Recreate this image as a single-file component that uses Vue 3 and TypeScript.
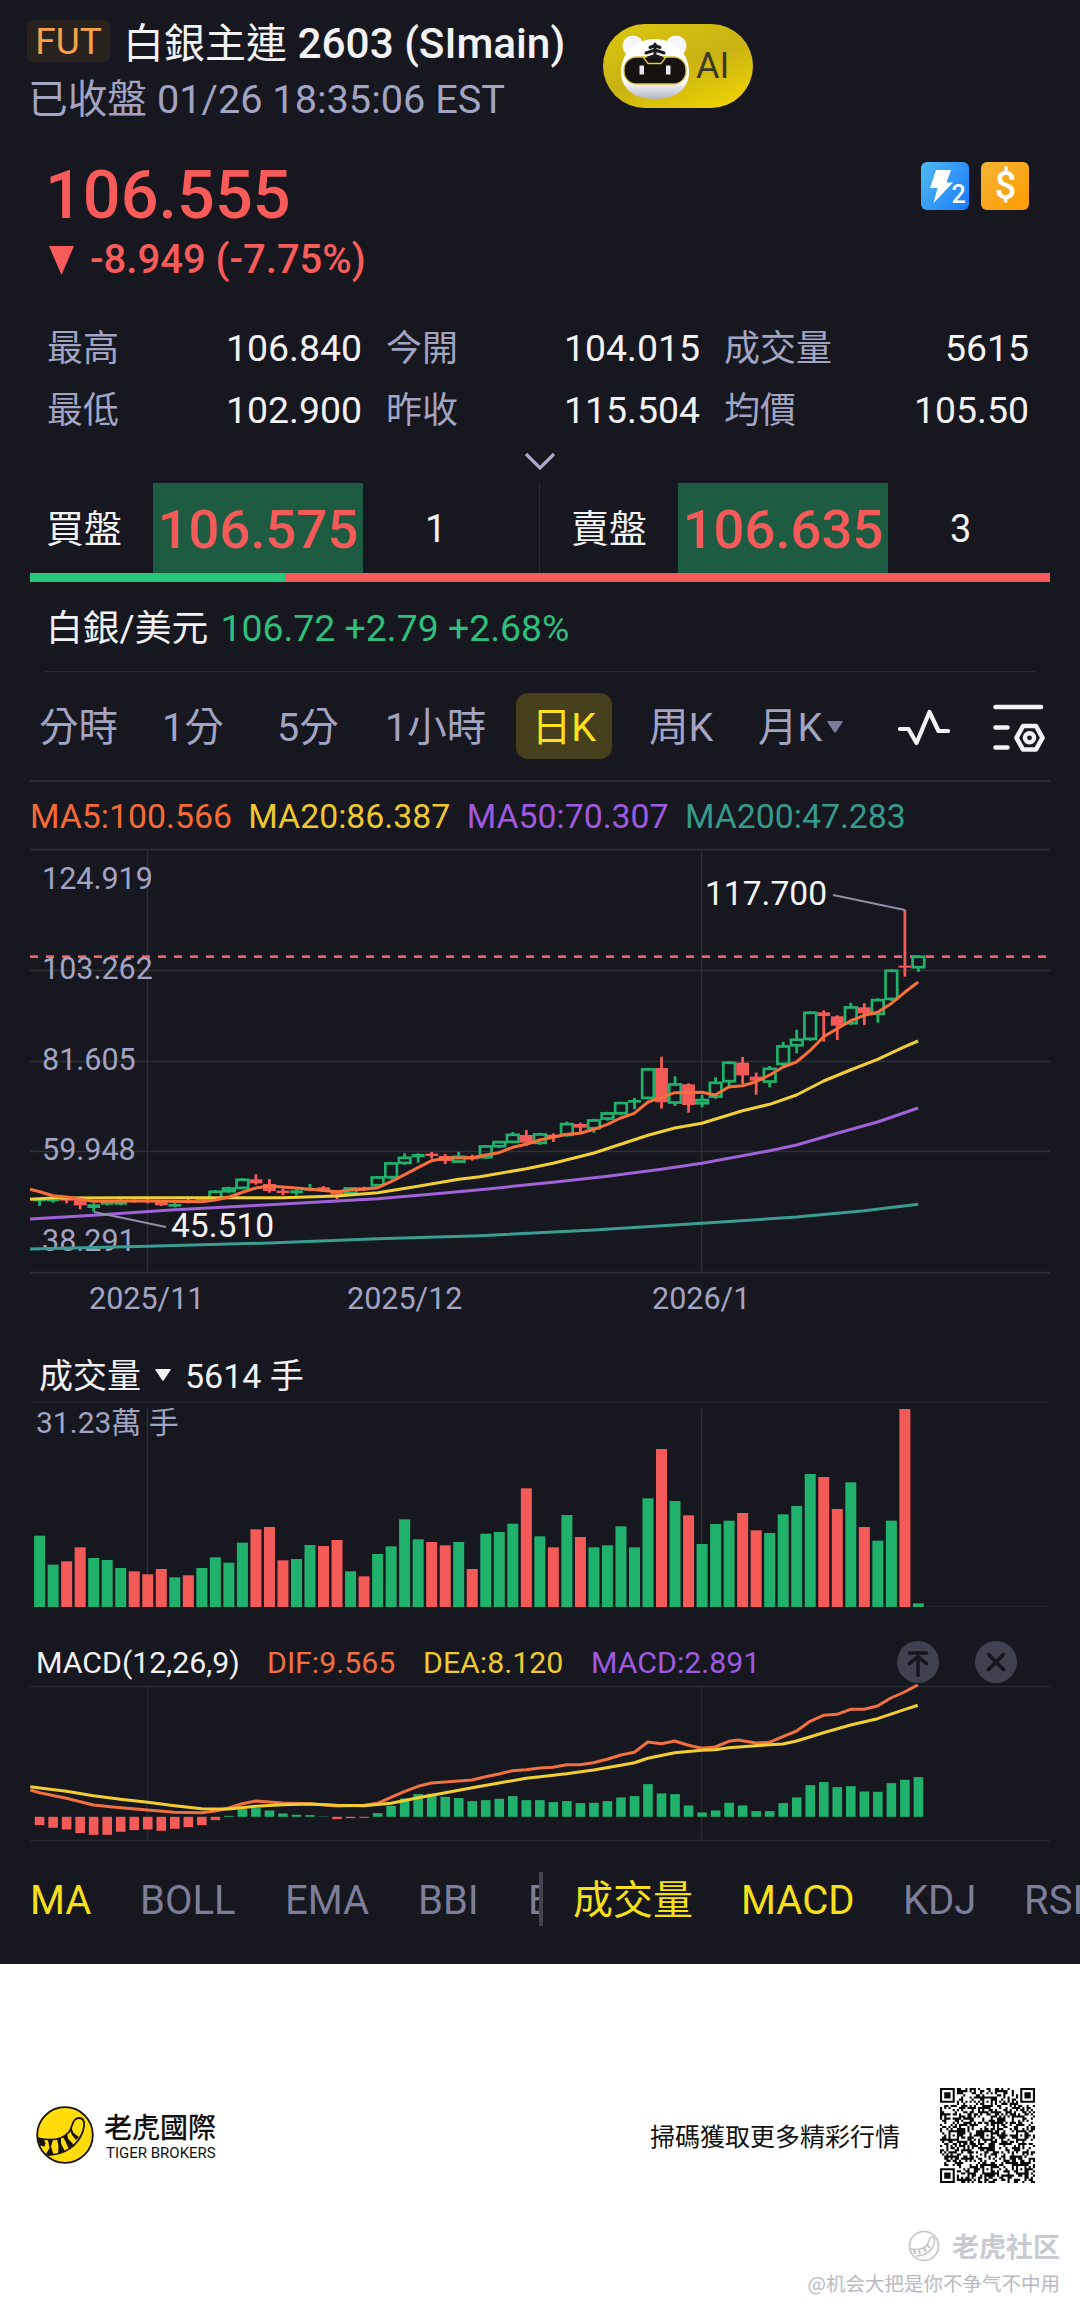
<script setup lang="ts">
import { ref } from 'vue';

type Point = [number, number];
// body top, body bottom, high, low (svg y), rising
type Candle = [number, number, number, number, boolean];

const stats = [
  { label: '最高', value: '106.840' },
  { label: '今開', value: '104.015' },
  { label: '成交量', value: '5615' },
  { label: '最低', value: '102.900' },
  { label: '昨收', value: '115.504' },
  { label: '均價', value: '105.50' },
];

const periods = ['分時', '1分', '5分', '1小時', '日K', '周K', '月K'];
const activePeriod = ref('日K');

const averages = [
  { name: 'MA5', value: '100.566', cls: 'c-orange' },
  { name: 'MA20', value: '86.387', cls: 'c-gold' },
  { name: 'MA50', value: '70.307', cls: 'c-purple' },
  { name: 'MA200', value: '47.283', cls: 'c-teal' },
];

const mainIndicators = ['MA', 'BOLL', 'EMA', 'BBI', 'E'];
const subIndicators = ['成交量', 'MACD', 'KDJ', 'RSI'];
const activeMain = ref('MA');
const activeSub = ref(['成交量', 'MACD']);

const STEP = 13.52;
const FIRST = 39.6;
const cx = (i: number) => FIRST + STEP * i;

const UP = '#20b26c';
const DOWN = '#f45b58';

// ---- price chart ----
const priceLabels = [
  { y: 889, text: '124.919' },
  { y: 979, text: '103.262' },
  { y: 1070, text: '81.605' },
  { y: 1160, text: '59.948' },
  { y: 1251, text: '38.291' },
];

// offsets from y=840, three units per pixel
const rawCandles: [number, number, number, number, string][] = [
  [1078, 1084, 1076, 1098, 'g'], [1078, 1084, 1078, 1088, 'g'], [1074, 1082, 1072, 1090, 'r'],
  [1078, 1096, 1078, 1108, 'r'], [1093, 1104, 1090, 1115, 'g'], [1086, 1094, 1080, 1096, 'g'],
  [1086, 1094, 1076, 1096, 'g'], [1082, 1086, 1078, 1088, 'r'], [1080, 1086, 1076, 1090, 'r'],
  [1086, 1096, 1084, 1098, 'r'], [1092, 1100, 1088, 1102, 'g'], [1081, 1087, 1076, 1090, 'r'],
  [1074, 1082, 1072, 1084, 'g'], [1053, 1078, 1050, 1080, 'g'], [1043, 1056, 1040, 1058, 'g'],
  [1017, 1046, 1014, 1048, 'g'], [1018, 1030, 1003, 1034, 'r'], [1032, 1053, 1017, 1058, 'r'],
  [1052, 1059, 1045, 1066, 'r'], [1051, 1060, 1048, 1066, 'g'], [1044, 1052, 1032, 1054, 'g'],
  [1042, 1050, 1038, 1056, 'r'], [1052, 1064, 1050, 1078, 'r'], [1043, 1062, 1042, 1064, 'g'],
  [1042, 1050, 1040, 1052, 'r'], [1010, 1038, 1008, 1040, 'g'], [968, 1014, 966, 1018, 'g'],
  [951, 971, 940, 974, 'g'], [942, 952, 940, 968, 'g'], [941, 948, 936, 956, 'r'],
  [948, 963, 942, 972, 'r'], [948, 967, 935, 968, 'g'], [948, 958, 944, 962, 'r'],
  [917, 954, 915, 956, 'g'], [904, 921, 902, 924, 'g'], [882, 908, 876, 910, 'g'],
  [885, 908, 870, 918, 'r'], [881, 911, 878, 914, 'g'], [884, 892, 880, 906, 'r'],
  [850, 887, 845, 890, 'g'], [852, 863, 848, 880, 'r'], [839, 867, 836, 878, 'g'],
  [818, 838, 815, 842, 'g'], [787, 822, 785, 826, 'g'], [780, 788, 774, 808, 'g'],
  [686, 776, 684, 778, 'g'], [684, 787, 650, 806, 'r'], [731, 790, 709, 798, 'g'],
  [733, 795, 730, 818, 'r'], [778, 792, 764, 802, 'g'], [726, 772, 712, 776, 'g'],
  [666, 726, 664, 738, 'g'], [668, 706, 651, 732, 'r'], [710, 722, 698, 764, 'r'],
  [684, 727, 678, 742, 'g'], [617, 674, 605, 680, 'g'], [597, 618, 569, 640, 'g'],
  [516, 599, 514, 602, 'g'], [517, 528, 511, 605, 'r'], [529, 557, 526, 600, 'r'],
  [500, 552, 488, 554, 'g'], [502, 520, 490, 555, 'r'], [478, 524, 475, 548, 'g'],
  [390, 479, 388, 482, 'g'], [377, 383, 210, 410, 'r'], [348, 384, 346, 395, 'g'],
];
const py = (v: number) => 840 + v / 3;
const candles: Candle[] = rawCandles.map(([t, b, h, l, c]) => [py(t), py(b), py(h), py(l), c === 'g']);

// hollow bodies only when there is room for the hole
const isHollow = (c: Candle) => c[4] && c[1] - c[0] > 4;

// left and right halves are sampled on different x scales
function toPath(left: Point[], right: Point[], lx: number, rx: number, rOff: number, yOff: number) {
  const pts = [
    ...left.map(([x, y]) => [x / lx, yOff + y / 3]),
    ...right.map(([x, y]) => [rOff + x / rx, yOff + y / 3]),
  ];
  return pts.map(([x, y]) => `${x.toFixed(1)},${y.toFixed(1)}`).join(' ');
}
const pricePath = (l: Point[], r: Point[]) => toPath(l, r, 3, 2.6133, 480, 840);
const macdPath = (l: Point[], r: Point[]) => toPath(l, r, 2.9037, 2.9037, 540, 1630);

const ma5 = pricePath(
  [[90, 1048], [119, 1055], [159, 1067], [200, 1071], [240, 1078], [281, 1084], [443, 1083], [605, 1085],
    [646, 1080], [687, 1071], [727, 1057], [768, 1044], [808, 1038], [889, 1044], [1011, 1055], [1052, 1050],
    [1092, 1048], [1133, 1043], [1173, 1025], [1214, 1004], [1254, 983], [1295, 962], [1335, 954], [1416, 953]],
  [[15, 945], [50, 938], [86, 922], [121, 913], [156, 900], [191, 892], [227, 883], [262, 880], [298, 868],
    [333, 853], [368, 834], [403, 820], [439, 786], [474, 772], [509, 758], [580, 757], [615, 765], [650, 741],
    [686, 737], [721, 725], [757, 705], [792, 681], [827, 666], [862, 632], [898, 590], [933, 566], [968, 543],
    [1004, 526], [1039, 517], [1074, 491], [1110, 457], [1145, 426]],
);
const ma20 = pricePath(
  [[90, 1078], [159, 1074], [400, 1073], [850, 1073], [1011, 1068], [1133, 1058], [1254, 1039], [1376, 1018]],
  [[0, 1010], [121, 986], [191, 970], [298, 939], [439, 886], [509, 864], [580, 850], [686, 812], [757, 793],
    [827, 765], [898, 723], [968, 690], [1039, 658], [1110, 620], [1145, 603]],
);
const ma50 = pricePath(
  [[90, 1137], [281, 1126], [524, 1109], [808, 1094], [1133, 1076], [1300, 1062]],
  [[0, 1049], [191, 1027], [333, 1009], [474, 988], [580, 970], [757, 932], [827, 915], [933, 880],
    [1039, 846], [1145, 804]],
);
const ma200 = pricePath(
  [[90, 1227], [443, 1219], [808, 1209], [1133, 1196]],
  [[0, 1187], [298, 1170], [580, 1150], [827, 1131], [1004, 1112], [1145, 1093]],
);

// ---- volume ----
const volumes =
  ('587g 674g 664r 622r 654g 660g 684g 694r 703r 687r 712g 706r 684g 652g 668g 608g 568r 561r 661r 657g 615g ' +
  '618r 600r 694g 709r 642g 619g 538g 598g 606r 616r 606g 687r 581g 576g 551g 445r 589g 622r 525g 591r 622g ' +
  '616g 559g 622g 475g 327r 483g 526r 612g 552g 542g 519r 571r 579g 523g 498g 402g 411r 507r 427g 561r 602g ' +
  '542g 207r 790g')
    .split(' ')
    .map((s) => ({ h: (801 - parseInt(s)) / 3, up: s.endsWith('g') }));

// ---- macd ----
const ZERO = 1816.8;
const macdBars = [
  585, 593, 598, 609, 614, 614, 605, 600, 598, 602, 596, 591, 585, 570, 557, 537, 534, 541, 550, 554, 555, 559,
  567, 564, 563, 549, 527, 505, 492, 491, 500, 504, 513, 510, 506, 498, 510, 510, 516, 513, 519, 518, 513, 502,
  498, 462, 490, 492, 526, 547, 541, 518, 526, 543, 543, 519, 502, 465, 456, 471, 468, 484, 485, 459, 449, 441,
].map((v) => (560 - v) / 3);

const dif = macdPath(
  [[88, 480], [115, 488], [193, 505], [271, 525], [350, 533], [429, 540], [507, 547], [586, 548], [625, 543],
    [664, 534], [703, 521], [743, 513], [821, 519], [900, 521], [978, 528], [1057, 526], [1096, 520], [1135, 502],
    [1174, 485], [1214, 469], [1253, 459], [1331, 453], [1371, 450], [1410, 440], [1449, 432], [1488, 422],
    [1528, 419]],
  [[0, 414], [38, 412], [77, 404], [116, 404], [155, 398], [195, 388], [235, 375], [274, 367], [313, 336],
    [352, 341], [391, 333], [431, 346], [470, 355], [509, 351], [548, 334], [575, 330], [627, 339], [666, 337],
    [705, 320], [745, 303], [784, 274], [823, 256], [862, 253], [902, 238], [941, 238], [980, 228], [1019, 204],
    [1058, 186], [1097, 165]],
);
const dea = macdPath(
  [[88, 470], [115, 474], [193, 484], [271, 497], [350, 508], [429, 517], [507, 527], [586, 536], [664, 537],
    [743, 529], [821, 524], [900, 522], [978, 526], [1057, 527], [1135, 520], [1214, 503], [1293, 488],
    [1371, 473], [1449, 459], [1528, 445]],
  [[0, 440], [77, 431], [155, 420], [235, 406], [274, 398], [313, 385], [391, 368], [470, 361], [509, 359],
    [548, 353], [627, 347], [705, 342], [745, 333], [823, 308], [902, 285], [980, 266], [1058, 239], [1097, 226]],
);

// ---- qr: 45x45 modules ----
function buildQr(n = 45) {
  let seed = 20260126;
  const rand = () => {
    seed = (seed * 1664525 + 1013904223) >>> 0;
    return seed / 4294967296;
  };
  const grid = Array.from({ length: n }, () => Array.from({ length: n }, () => rand() < 0.5));
  const ring = (r: number, c: number, size: number, core: number) => {
    for (let y = -size; y <= size; y++) {
      for (let x = -size; x <= size; x++) {
        const gy = r + y;
        const gx = c + x;
        if (gy < 0 || gx < 0 || gy >= n || gx >= n) continue;
        const d = Math.max(Math.abs(x), Math.abs(y));
        grid[gy][gx] = d <= core || d === core + 2;
      }
    }
  };
  for (let i = 8; i < n - 8; i++) {
    grid[6][i] = i % 2 === 0;
    grid[i][6] = i % 2 === 0;
  }
  ring(3, 3, 4, 1);
  ring(3, n - 4, 4, 1);
  ring(n - 4, 3, 4, 1);
  for (const [r, c] of [[6, 22], [22, 6], [22, 22], [22, 38], [38, 22], [38, 38]]) ring(r, c, 2, 0);
  let d = '';
  grid.forEach((row, y) => row.forEach((on, x) => { if (on) d += `M${x} ${y}h1v1h-1z`; }));
  return d;
}
const qrPath = buildQr();
</script>

<template>
  <div class="page">
    <main class="app">
      <header class="header">
        <div class="heading">
          <div class="title-row">
            <span class="fut">FUT</span>
            <h1 class="title"><span class="zh">白銀主連</span> 2603 (SImain)</h1>
          </div>
          <div class="subtitle">已收盤 01/26 18:35:06 EST</div>
        </div>
        <button class="ai-pill">
          <svg class="tiger" width="72" height="68" viewBox="0 0 72 68">
            <defs>
              <linearGradient id="headFill" x1="0" y1="0" x2="0" y2="1">
                <stop offset="0.7" stop-color="#ffffff" />
                <stop offset="1" stop-color="#b4b5c6" />
              </linearGradient>
            </defs>
            <circle cx="14" cy="14" r="10.500" fill="#f6f6f8" />
            <circle cx="57" cy="14" r="10.500" fill="#f6f6f8" />
            <path d="M36 7C56 7 70 22 70 40C70 56 58 67 36 67C14 67 2 56 2 40C2 22 16 7 36 7z" fill="url(#headFill)" />
            <rect x="5" y="25" width="62" height="27" rx="12.500" fill="#15120f" stroke="#d8c63a" stroke-width="1.300" />
            <path d="M24 25h23l-5 6.500H29z" fill="#15120f" stroke="#e0cf3c" stroke-width="1.300" />
            <path d="M36 12v13M36 13.500l-5 2M36 13.500l5 2M36 18l-9 3M36 18l9 3M36 23.500l-7 2.500M36 23.500l7 2.500" stroke="#1c1c20" stroke-width="3" stroke-linecap="round" fill="none" />
            <rect x="20.500" y="33.500" width="4.500" height="9" fill="#e6e6ea" />
            <rect x="47" y="33.500" width="4.500" height="9" fill="#e6e6ea" />
          </svg>
          <span>AI</span>
        </button>
      </header>

      <section class="quote">
        <div>
          <div class="last">106.555</div>
          <div class="change">
            <svg width="25" height="29" viewBox="0 0 25 29"><path d="M0 0h25L12.500 29z" fill="#f85b59" /></svg>
            <span>-8.949 (-7.75%)</span>
          </div>
        </div>
        <div class="badges">
          <svg width="48" height="48" viewBox="0 0 48 48">
            <defs>
              <linearGradient id="blueFill" x1="0" y1="0.2" x2="1" y2="0.8">
                <stop offset="0" stop-color="#4bb4f3" />
                <stop offset="1" stop-color="#1d80fb" />
              </linearGradient>
            </defs>
            <rect width="48" height="48" rx="6" fill="url(#blueFill)" />
            <path d="M15 8h15l-4.500 12.500h6.500L12.500 41l4-15H9z" fill="#fff" />
            <text x="30.500" y="41" class="badge-two">2</text>
          </svg>
          <svg width="48" height="48" viewBox="0 0 48 48">
            <defs>
              <linearGradient id="goldFill" x1="0" y1="0" x2="1" y2="1">
                <stop offset="0" stop-color="#f2b535" />
                <stop offset="1" stop-color="#ff9b00" />
              </linearGradient>
            </defs>
            <rect width="48" height="48" rx="6" fill="url(#goldFill)" />
            <text x="24.500" y="36.500" text-anchor="middle" class="badge-dollar">$</text>
          </svg>
        </div>
      </section>

      <section class="stats">
        <div v-for="s in stats" :key="s.label" class="stat">
          <span class="stat-label">{{ s.label }}</span>
          <span class="stat-value">{{ s.value }}</span>
        </div>
      </section>
      <div class="expand">
        <svg width="32" height="20" viewBox="0 0 32 20"><path d="M2 2l14 14L30 2" fill="none" stroke="#a9aac6" stroke-width="3.200" /></svg>
      </div>

      <section class="book">
        <div class="side">
          <span class="side-label">買盤</span>
          <span class="side-price">106.575</span>
          <span class="side-qty">1</span>
        </div>
        <div class="side ask">
          <span class="side-label">賣盤</span>
          <span class="side-price">106.635</span>
          <span class="side-qty">3</span>
        </div>
      </section>
      <div class="ratio"><i :style="{ width: '25%' }"></i></div>

      <div class="pair">
        <span>白銀/美元</span>
        <span class="pair-quote">106.72 +2.79 +2.68%</span>
      </div>

      <nav class="periods">
        <span
          v-for="p in periods"
          :key="p"
          class="period"
          :class="{ active: p === activePeriod }"
          @click="activePeriod = p"
        >{{ p }}<svg v-if="p === '月K'" class="caret" width="16" height="12" viewBox="0 0 16 12"><path d="M1 0h14q1 0 .6 1L9 11q-1 1.500-2 0L.4 1Q0 0 1 0z" fill="#7b7d99" /></svg></span>
        <svg width="52" height="38" viewBox="0 0 52 38" class="tool">
          <path d="M2 20h8.500l8 14L31.500 3l9 19H50" fill="none" stroke="#f2f2f4" stroke-width="4.200" stroke-linecap="round" stroke-linejoin="round" />
        </svg>
        <svg width="52" height="50" viewBox="0 0 52 50" class="tool">
          <g fill="none" stroke="#f2f2f4" stroke-width="4.600" stroke-linecap="round" stroke-linejoin="round">
            <path d="M2.500 4H48M2.500 24.500H14.500M2.500 44.500H14.500" />
            <path d="M30 23h13l6.500 11.800L43 46.500H30l-6.500-11.700z" />
            <circle cx="36.500" cy="34.800" r="4.600" stroke-width="4.400" />
          </g>
        </svg>
      </nav>

      <div class="averages">
        <span v-for="a in averages" :key="a.name" :class="a.cls">{{ a.name }}:{{ a.value }}</span>
      </div>

      <svg class="chart" width="1080" height="493" viewBox="0 847 1080 493">
        <g stroke="#2e3036" stroke-width="1.300">
          <path d="M30 849.500H1050M30 970.500H1050M30 1061.500H1050M30 1151.500H1050M30 1272.500H1050" />
          <path d="M147.500 849V1272M701.500 849V1272" />
        </g>
        <path d="M30 956.700H1046" stroke="#ee6068" stroke-width="2.800" stroke-dasharray="8 8" />
        <g class="axis">
          <text v-for="l in priceLabels" :key="l.y" x="42" :y="l.y">{{ l.text }}</text>
        </g>
        <g v-for="(c, i) in candles" :key="i" :stroke="c[4] ? UP : DOWN">
          <template v-if="isHollow(c)">
            <path :d="`M${cx(i)} ${c[2]}V${c[0]}M${cx(i)} ${c[1]}V${c[3]}`" stroke-width="2.800" />
            <rect :x="cx(i) - 5.8" :y="c[0] + 0.8" width="11.600" :height="c[1] - c[0] - 1.6" fill="none" stroke-width="2.700" />
          </template>
          <template v-else>
            <path :d="`M${cx(i)} ${c[2]}V${c[3]}`" stroke-width="2.800" />
            <rect :x="cx(i) - 6.4" :y="c[0]" width="12.800" :height="c[1] - c[0]" stroke="none" :fill="c[4] ? UP : DOWN" />
          </template>
        </g>
        <g fill="none" stroke-width="3" stroke-linejoin="round">
          <polyline :points="ma200" stroke="#3b9d8f" />
          <polyline :points="ma50" stroke="#9f62d8" />
          <polyline :points="ma20" stroke="#f1cf35" />
          <polyline :points="ma5" stroke="#f7703a" />
        </g>
        <g stroke="#8f90a8" stroke-width="2">
          <path d="M94 1212L166 1227M833 895L905 910" />
        </g>
        <g class="mark">
          <text x="171" y="1237">45.510</text>
          <text x="705" y="905">117.700</text>
        </g>
        <g class="axis">
          <text x="89" y="1309">2025/11</text>
          <text x="347" y="1309">2025/12</text>
          <text x="652" y="1309">2026/1</text>
        </g>
      </svg>

      <div class="volume-head">
        <span>成交量</span>
        <svg width="16" height="12" viewBox="0 0 16 12"><path d="M1 0h14q1 0 .6 1L9 11q-1 1.500-2 0L.4 1Q0 0 1 0z" fill="#f4f4f4" /></svg>
        <span>5614 手</span>
      </div>

      <svg class="chart" width="1080" height="230" viewBox="0 1400 1080 230">
        <g stroke="#22242b" stroke-width="1.200">
          <path d="M30 1402.500H1050M30 1606.500H1050" />
        </g>
        <path d="M147.500 1409V1607M701.500 1409V1607" stroke="#2f3138" stroke-width="1.300" />
        <text class="axis volume-max" x="36" y="1433">31.23萬 手</text>
        <rect
          v-for="(v, i) in volumes"
          :key="i"
          :x="cx(i) - 5.5"
          :y="1607 - v.h"
          width="11"
          :height="v.h"
          :fill="v.up ? UP : DOWN"
        />
      </svg>

      <div class="macd-head">
        <span class="macd-name">MACD(12,26,9)</span>
        <span class="macd-dif">DIF:9.565</span>
        <span class="macd-dea">DEA:8.120</span>
        <span class="macd-val">MACD:2.891</span>
        <svg class="round" width="42" height="42" viewBox="0 0 42 42">
          <circle cx="21" cy="21" r="21" fill="#40424f" />
          <path d="M12.500 12h17M21 34.500V17M12.500 22.500L21 15.500l8.500 7" fill="none" stroke="#15161e" stroke-width="3.600" stroke-linecap="round" />
        </svg>
        <svg class="round" width="42" height="42" viewBox="0 0 42 42">
          <circle cx="21" cy="21" r="21" fill="#40424f" />
          <path d="M13.500 13.500l15 15M28.500 13.500l-15 15" stroke="#15161e" stroke-width="3.800" stroke-linecap="round" />
        </svg>
      </div>

      <svg class="chart" width="1080" height="162" viewBox="0 1684 1080 162">
        <g stroke="#282a31" stroke-width="1.300">
          <path d="M30 1686.500H1050M30 1840.500H1050M147.500 1685V1840M701.500 1685V1840" />
        </g>
        <rect
          v-for="(v, i) in macdBars"
          :key="i"
          :x="cx(i) - 4.8"
          :y="v > 0 ? ZERO - v : ZERO"
          width="9.600"
          :height="Math.abs(v)"
          :fill="v > 0 ? UP : DOWN"
        />
        <g fill="none" stroke-width="3" stroke-linejoin="round">
          <polyline :points="dif" stroke="#f1703f" />
          <polyline :points="dea" stroke="#f3ce2f" />
        </g>
      </svg>

      <nav class="indicators">
        <div class="group main-group">
          <span v-for="m in mainIndicators" :key="m" :class="{ on: m === activeMain }" @click="activeMain = m">{{ m }}</span>
        </div>
        <i class="bar"></i>
        <div class="group sub-group">
          <span v-for="s in subIndicators" :key="s" :class="{ on: activeSub.includes(s) }">{{ s }}</span>
        </div>
      </nav>
    </main>

    <footer class="footer">
      <div class="footer-row">
        <svg width="58" height="58" viewBox="0 0 58 58">
          <circle cx="29" cy="29" r="27.800" fill="#ffdc0a" stroke="#17120a" stroke-width="1.800" />
          <path d="M2 32C14 35 26 34 33 26C37 21 36 12 43 12C49 12 49 19 47 25C42 40 28 49 12 49" fill="none" stroke="#17120a" stroke-width="1.800" />
          <path d="M2 32l6 1.500 1.500 4-1 3-4.500-1zM12 34l5-.5-2 7 2.500 8-8 .5 4-7zM21 33l4-1.500v6l4 8-7 2 .5-7zM27 31l4-3.500 1 5 5.500 6-5 4-2.500-6zM34 24.500l1.500-2.500 2 5 5.500 4-3 3-4-5z" fill="#17120a" />
        </svg>
        <div class="brand">
          <div class="brand-zh">老虎國際</div>
          <div class="brand-en">TIGER BROKERS</div>
        </div>
        <div class="scan">掃碼獲取更多精彩行情</div>
        <svg class="qr" width="95" height="95" viewBox="0 0 45 45"><path :d="qrPath" fill="#0a0a0a" /></svg>
      </div>
      <div class="mark-row">
        <svg width="32" height="32" viewBox="0 0 32 32" fill="none" stroke="#c3c4cb">
          <circle cx="16" cy="16" r="14.500" stroke-width="1.600" />
          <path d="M3 19c7 1 13 0 16-4 2-3 2-8 5-8s3 4 2 7c-2 7-9 12-18 12" stroke-width="1.400" />
          <path d="M6 20l1 4M11 20l1 4M16 18l2 4M19 15l3 3" stroke-width="2.200" />
        </svg>
        <span>老虎社区</span>
      </div>
      <div class="author">@机会大把是你不争气不中用</div>
    </footer>
  </div>
</template>

<style>
body { margin: 0; background: #fff; }
</style>

<style scoped>
.page {
  width: 1080px;
  height: 2309px;
  overflow: hidden;
  font-family: Roboto, "Noto Sans CJK TC", sans-serif;
  color: #f2f2f4;
}
.app {
  height: 1964px;
  background: #16171f;
  overflow: hidden;
}
svg { display: block; flex: none; }
.c-orange { color: #f66b35; }
.c-gold { color: #edc92e; }
.c-purple { color: #9f5be0; }
.c-teal { color: #369a8b; }

.header {
  height: 140px;
  box-sizing: border-box;
  padding: 20px 0 0 27px;
  display: flex;
}
.heading { width: 576px; }
.title-row { display: flex; height: 42px; align-items: center; }
.fut {
  width: 83px;
  height: 42px;
  line-height: 43px;
  border-radius: 6px;
  background: #29231f;
  color: #f7a14b;
  font-size: 37px;
  text-align: center;
  margin-right: 13px;
}
.title { margin: 0; font-size: 42.3px; font-weight: 500; line-height: 46px; white-space: nowrap; padding-top: 6px; }
.zh { font-size: 41px; font-weight: 400; }
.subtitle { margin-top: 18px; padding-left: 1px; font-size: 39.7px; line-height: 40px; color: #a2a4c2; }
.ai-pill {
  width: 150px;
  height: 84px;
  margin: 4px 0 0;
  padding: 0 0 0 16px;
  border: 0;
  border-radius: 42px;
  background: linear-gradient(160deg, #dcc80e 0%, #c9b214 50%, #f3d800 100%);
  display: flex;
  align-items: center;
  gap: 5px;
  font: 36px/84px Roboto, sans-serif;
  color: #3c3a26;
}

.quote {
  height: 166px;
  display: flex;
  justify-content: space-between;
  padding: 0 51px 0 45px;
}
.last { padding-top: 19px; font-size: 66.6px; line-height: 72px; font-weight: 500; color: #f85b59; }
.change { display: flex; align-items: center; gap: 16px; margin: 8px 0 0 4px; font-size: 40px; line-height: 42px; font-weight: 500; color: #f85b59; }
.badges { display: flex; gap: 12px; padding-top: 22px; }
.badge-two { font: 500 25px Roboto, sans-serif; fill: #fff; }
.badge-dollar { font: 500 38px Roboto, sans-serif; fill: #fff; }

.stats {
  height: 142px;
  box-sizing: border-box;
  padding: 11px 51px 0 47px;
  display: grid;
  grid-template-columns: 315px 314px 305px;
  column-gap: 24px;
  grid-auto-rows: 62px;
  font-size: 36px;
  line-height: 62px;
}
.stat { display: flex; justify-content: space-between; }
.stat-label { color: #a2a4c2; line-height: 64px; }
.stat-value { font-size: 37.4px; }
.expand { height: 35px; display: flex; justify-content: center; padding-top: 4px; box-sizing: border-box; }

.book { height: 90px; margin-left: 30px; display: flex; line-height: 93px; }
.side { width: 509px; display: flex; }
.ask { border-left: 1px solid #2a2c33; width: 515px; }
.side-label { width: 107px; padding-left: 16px; font-size: 38px; }
.ask .side-label { padding-left: 31px; }
.side-price { width: 210px; background: #1e5b43; text-align: center; font-size: 54.4px; font-weight: 500; color: #f45b58; }
.side-qty { padding-left: 62px; font-size: 38px; }
.ratio { height: 9px; margin: 0 30px; background: #f65b59; }
.ratio i { display: block; height: 9px; background: #2bc67d; }

.pair {
  margin: 0 45px;
  height: 89px;
  border-bottom: 1px solid #2a2c33;
  padding-left: 1px;
  line-height: 93px;
  font-size: 36.8px;
  display: flex;
  gap: 12px;
}
.pair-quote { color: #2fbe7c; font-size: 37.4px; }

.periods {
  height: 108px;
  margin: 0 30px;
  padding: 0 0 0 9px;
  border-bottom: 2px solid #2b2c33;
  display: grid;
  grid-template-columns: 123px 115px 108px 131px 133px 109px 140px 95px 1fr;
  align-items: center;
  font-size: 39.5px;
  color: #a2a4c2;
}
.period { height: 66px; line-height: 62px; padding-top: 4px; box-sizing: border-box; display: flex; align-items: center; }
.period.active { width: 96px; justify-content: center; border-radius: 12px; background: #47401c; color: #fbe01a; }
.caret { margin: -3px 0 0 5px; }
.tool { margin-top: 3px; }

.averages { height: 65px; padding-left: 30px; display: flex; gap: 16.4px; font-size: 33.8px; line-height: 69px; }
.axis { font: 30.5px Roboto, "Noto Sans CJK TC", sans-serif; fill: #a2a4c2; }
.volume-max { font-size: 30px; }
.mark { font: 33.6px Roboto, sans-serif; fill: #f4f4f6; }

.volume-head { height: 60px; padding: 12px 0 0 39px; display: flex; gap: 14px; align-items: center; font-size: 34px; box-sizing: border-box; line-height: 48px; }
.volume-head svg { margin-top: -3px; }

.macd-head { height: 54px; padding-left: 36px; display: grid; grid-template-columns: 231px 156px 168px 306px 78px 42px; align-items: center; font-size: 30.3px; line-height: 65px; }
.macd-head .round { margin-top: -2px; }
.macd-dif { color: #f1703f; }
.macd-dea { color: #edcb2f; }
.macd-val { color: #9f5be0; }

.indicators { height: 118px; display: flex; align-items: center; font-size: 40px; line-height: 54px; color: #7d7e97; margin-top: -6px; }
.indicators .on { color: #f7e01b; }
.group { display: grid; overflow: hidden; white-space: nowrap; padding-top: 4px; }
.main-group { width: 509px; padding-left: 30px; grid-template-columns: 110px 145px 133px 110px 80px; }
.sub-group { width: 507px; padding-left: 30px; grid-template-columns: 168px 162px 121px 80px; }
.bar { width: 4px; height: 54px; background: #43444f; }

.footer { height: 345px; background: #fff; color: #111; }
.footer-row { display: flex; align-items: center; height: 98px; padding: 122px 45px 0 36px; }
.brand { margin-left: 10px; width: 200px; padding-top: 3px; }
.brand-zh { font-size: 28px; line-height: 33px; font-weight: 500; }
.brand-en { padding-left: 2px; font-size: 15px; line-height: 17px; }
.scan { margin-left: auto; margin-right: 40px; font-size: 25px; }
.mark-row { display: flex; align-items: center; justify-content: flex-end; gap: 12px; margin-top: 44px; height: 36px; padding-right: 20px; font: 700 27px/36px "Noto Sans CJK SC", sans-serif; color: #c9cad0; }
.author { text-align: right; padding-right: 20px; margin-top: 6px; font: 19.5px/26px "Noto Sans CJK SC", sans-serif; color: #b9bac0; }
</style>
